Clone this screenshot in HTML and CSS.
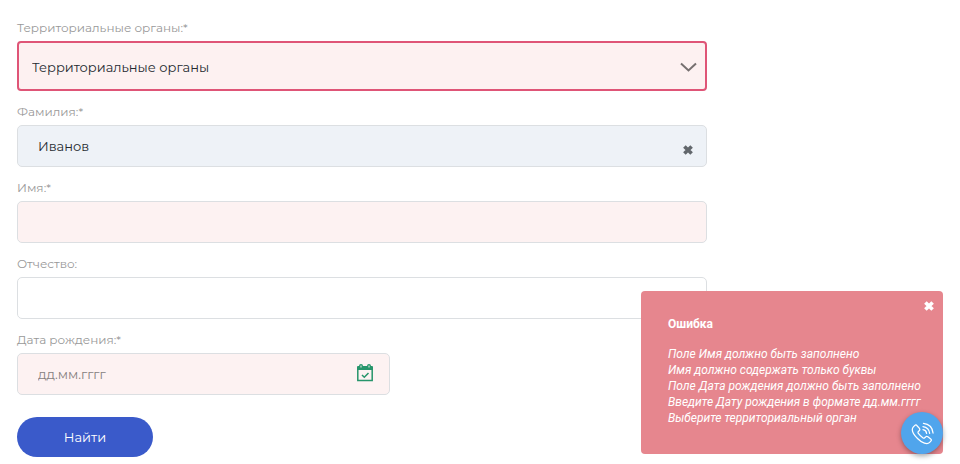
FILE: index.html
```html
<!DOCTYPE html>
<html lang="ru">
<head>
<meta charset="utf-8">
<meta name="viewport" content="width=device-width, initial-scale=1">
<title>Поиск</title>
<link rel="stylesheet" href="styles.css">
</head>
<body>
<form class="form">
  <div class="field">
    <label class="label" for="organ">Территориальные органы:*</label>
    <div class="control">
      <select class="input select" id="organ"><option>Территориальные органы</option></select>
      <svg class="chevron" viewBox="0 0 17 10" aria-hidden="true"><path d="M1 1.500l7.500 7 7.500-7"/></svg>
    </div>
  </div>
  <div class="field">
    <label class="label" for="surname">Фамилия:*</label>
    <div class="control">
      <input class="input filled" id="surname" type="text" value="Иванов">
      <button class="clear" type="button" aria-label="Очистить"><svg class="cross" viewBox="0 0 10 10"><path d="M2 2l6 6M8 2l-6 6"/></svg></button>
    </div>
  </div>
  <div class="field">
    <label class="label" for="name">Имя:*</label>
    <input class="input invalid" id="name" type="text">
  </div>
  <div class="field">
    <label class="label" for="patronymic">Отчество:</label>
    <input class="input" id="patronymic" type="text">
  </div>
  <div class="field date">
    <label class="label" for="birth">Дата рождения:*</label>
    <div class="control">
      <input class="input invalid" id="birth" type="text" placeholder="дд.мм.гггг">
      <button class="calendar" type="button" aria-label="Выбрать дату"><svg class="calendar-icon" viewBox="0 0 16 18"><path class="solid" d="M0 3q0-1 1-1h1q0-2 2-2t2 2h4q0-2 2-2t2 2h1q1 0 1 1v3H0z"/><path class="frame" d="M.8 5v11.500h14.400V5"/><path class="frame" d="M5 11l2.300 2.300L11.500 9"/><path class="ring" d="M4 1.500v2M12 1.500v2"/></svg></button>
    </div>
  </div>
  <button class="submit" type="button">Найти</button>
</form>
<section class="toast" role="alert">
  <button class="toast-close" type="button" aria-label="Закрыть"><svg class="cross" viewBox="0 0 10 10"><path d="M2 2l6 6M8 2l-6 6"/></svg></button>
  <h2 class="toast-title">Ошибка</h2>
  <p class="toast-text">Поле Имя должно быть заполнено<br>Имя должно содержать только буквы<br>Поле Дата рождения должно быть заполнено<br>Введите Дату рождения в формате дд.мм.гггг<br>Выберите территориальный орган</p>
</section>
<button class="call" type="button" aria-label="Позвонить">
  <svg class="phone" viewBox="0 0 24 24"><path d="M3.800 3.800L2.500 5.100C.3 7.500 2 12.300 6.800 17.200S17 23.700 19.200 21.500l1.500-1.500q1.200-1.200-.1-2.300l-3-2.300q-1.300-1-2.400.2l-.9.900q-.8.800-2 0-2.600-1.900-4.600-4.600-.8-1.100 0-2l.8-.8q1.200-1.200.3-2.400L6.300 3.900q-1.100-1.500-2.500-.1z"/><path d="M12.500 8q3.300.5 3.800 3.800M12.500 4.800q6.200.8 7 7M13 1.500q9 1 10 10"/></svg>
</button>
</body>
</html>
```
FILE: styles.css
```css
* { box-sizing: border-box; }
body {
  margin: 0;
  padding: 19px 17px 6px;
  background: #fff;
  color: #252a30;
  font-family: Montserrat, "Open Sans", sans-serif;
}
button { padding: 0; border: 0; background: none; cursor: pointer; }
svg { display: block; fill: none; stroke: currentColor; }
.form {
  display: flex;
  flex-direction: column;
  gap: 12px;
  max-width: 690px;
}
.field { display: flex; flex-direction: column; gap: 4px; }
.date { width: 54%; }
.label { color: #999; font-size: 12px; line-height: 18px; }
.control { position: relative; }
.input {
  display: block;
  width: 100%;
  height: 42px;
  padding: 0 20px;
  border: 1px solid #dcdfe2;
  border-radius: 5px;
  background: #fff;
  color: inherit;
  font: 13px/20px Montserrat, "Open Sans", sans-serif;
  outline: 0;
}
.input::placeholder { color: #858080; opacity: 1; }
.filled { background: #eef2f7; }
.invalid { background: #fdf2f2; }
.select {
  height: 50px;
  padding: 2px 40px 0 13px;
  border: 2px solid #df5577;
  border-radius: 4px;
  background: #fdf1f1;
  appearance: none;
}
.chevron {
  position: absolute;
  top: 21px;
  right: 10px;
  width: 17px;
  height: 10px;
  color: #767070;
  stroke-width: 2;
  pointer-events: none;
}
.cross { width: 12px; height: 12px; stroke-width: 3; }
.clear { position: absolute; top: 19px; right: 13px; color: #62676c; }
.calendar { position: absolute; top: 11px; right: 17px; color: #27956b; }
.calendar-icon { width: 16px; height: 18px; }
.solid { fill: currentColor; stroke: none; }
.frame { stroke-width: 1.5px; }
.ring { stroke: #fdf2f2; }
.submit {
  width: 136px;
  height: 40px;
  margin-top: 10px;
  border-radius: 20px;
  background: #3a5aca;
  color: #fff;
  font: 13px/20px Montserrat, "Open Sans", sans-serif;
}
.toast {
  position: fixed;
  right: 17px;
  bottom: 10px;
  width: 302px;
  padding: 25px 20px 28px 27px;
  border-radius: 4px;
  background: #e6868e;
  color: #fff;
  font-family: Roboto, sans-serif;
}
.toast-close { position: absolute; top: 9px; right: 8px; color: #fff; }
.toast-title { margin: 0 0 14px; font-size: 12px; line-height: 16px; font-weight: 700; }
.toast-text { margin: 0; font-size: 12px; line-height: 16px; font-style: italic; white-space: nowrap; }
.call {
  position: fixed;
  right: 17px;
  bottom: 10px;
  display: grid;
  place-items: center;
  width: 42px;
  height: 42px;
  border-radius: 50%;
  background: #50a5ec;
  color: #fff;
  box-shadow: 0 2px 5px rgba(0, 0, 0, .35);
}
.phone { width: 23px; height: 23px; stroke-width: 1.3px; stroke-linecap: round; stroke-linejoin: round; }
```
